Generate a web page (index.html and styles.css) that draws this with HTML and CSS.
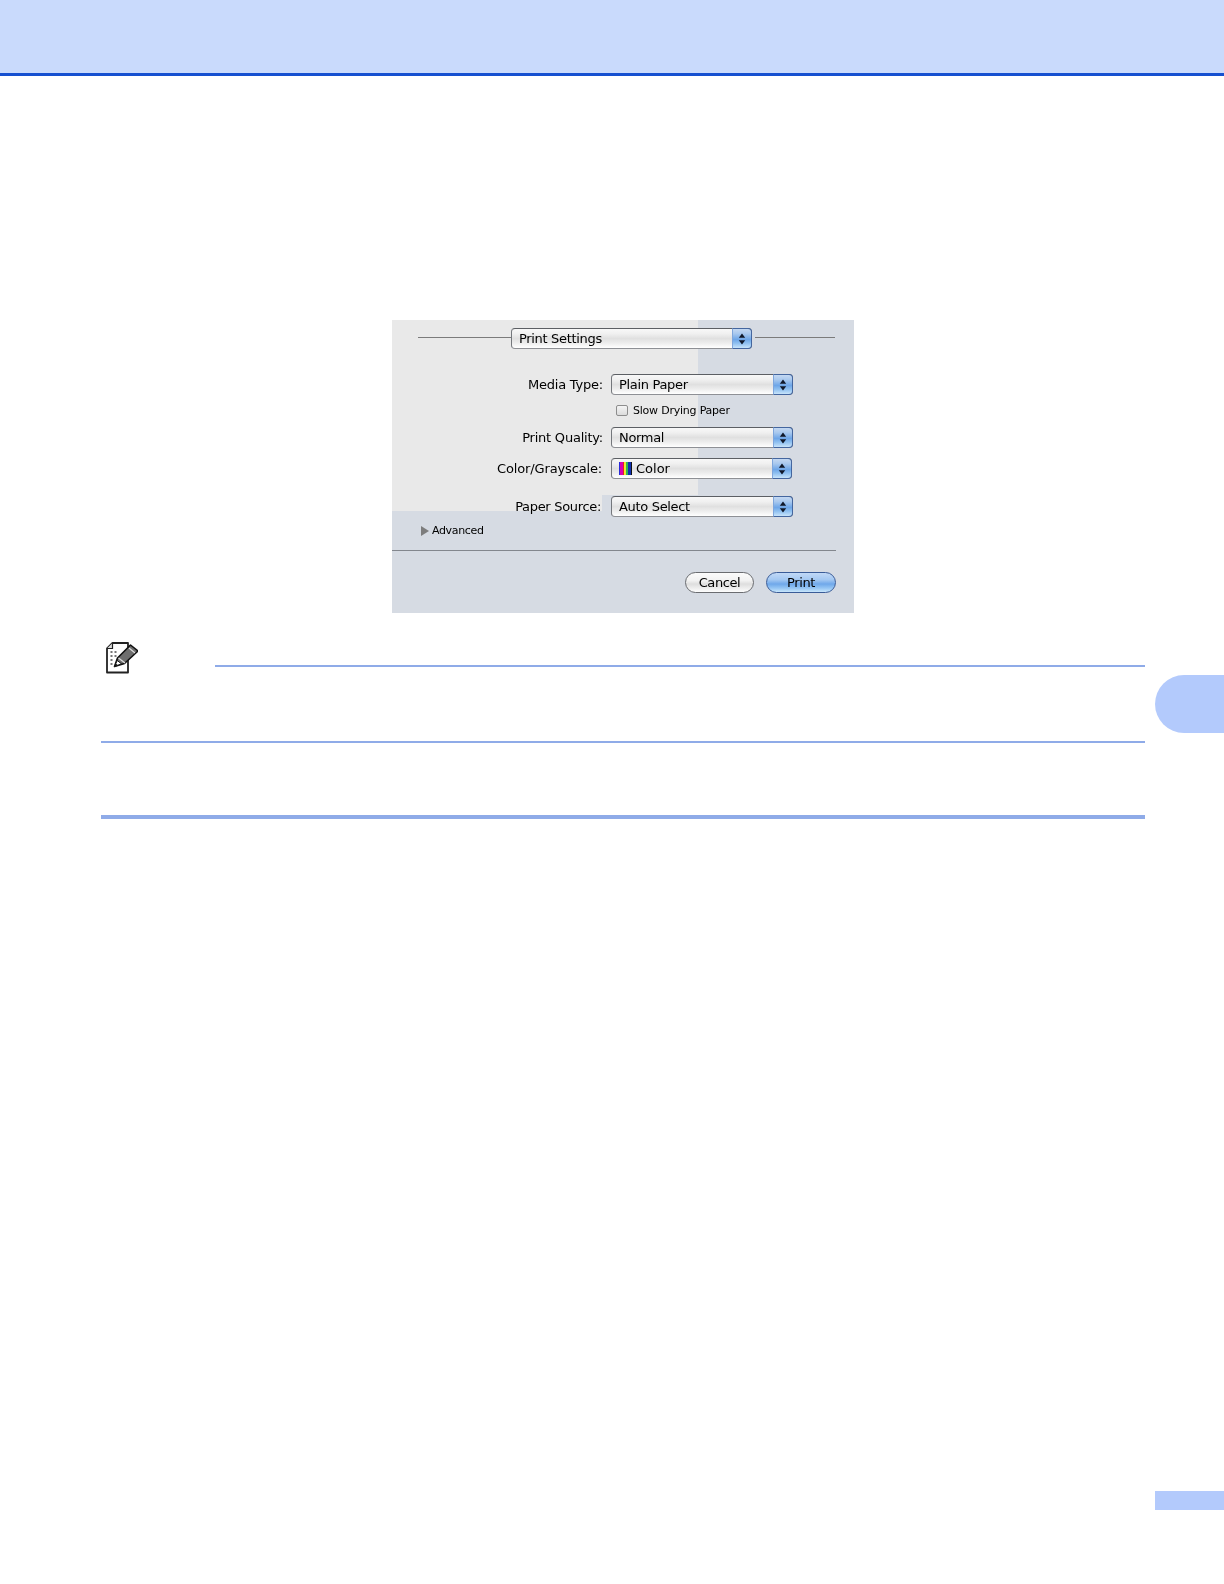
FILE: index.html
```html
<!DOCTYPE html>
<html lang="en">
<head>
<meta charset="utf-8">
<title>Print Settings</title>
<link rel="stylesheet" href="styles.css">
</head>
<body>
<div class="page">
  <header class="banner"></header>
  <main class="content">
    <section class="dialog">
      <div class="bg-light-top"></div>
      <div class="bg-light-left"></div>
      <div class="title-row">
        <span class="rule"></span>
        <div class="select select-title"><span class="select-text">Print Settings</span><span class="stepper"><svg class="arrows" viewBox="0 0 8 12"><path d="M4 0.500 7.200 4.700H0.800zM4 11.500 0.800 7.300H7.200z"/></svg></span></div>
        <span class="rule rule-right"></span>
      </div>
      <div class="form">
        <label class="label label-media">Media Type:</label>
        <div class="select"><span class="select-text">Plain Paper</span><span class="stepper"><svg class="arrows" viewBox="0 0 8 12"><path d="M4 0.500 7.200 4.700H0.800zM4 11.500 0.800 7.300H7.200z"/></svg></span></div>
        <div class="check-row"><span class="checkbox"></span><span class="check-text">Slow Drying Paper</span></div>
        <label class="label label-quality">Print Quality:</label>
        <div class="select select-quality"><span class="select-text">Normal</span><span class="stepper"><svg class="arrows" viewBox="0 0 8 12"><path d="M4 0.500 7.200 4.700H0.800zM4 11.500 0.800 7.300H7.200z"/></svg></span></div>
        <label class="label label-color">Color/Grayscale:</label>
        <div class="select select-color"><span class="swatch"></span><span class="select-text select-text-color">Color</span><span class="stepper"><svg class="arrows" viewBox="0 0 8 12"><path d="M4 0.500 7.200 4.700H0.800zM4 11.500 0.800 7.300H7.200z"/></svg></span></div>
        <label class="label label-source">Paper Source:</label>
        <div class="select select-source"><span class="select-text">Auto Select</span><span class="stepper"><svg class="arrows" viewBox="0 0 8 12"><path d="M4 0.500 7.200 4.700H0.800zM4 11.500 0.800 7.300H7.200z"/></svg></span></div>
      </div>
      <div class="advanced"><span class="disclosure"></span><span class="advanced-text">Advanced</span></div>
      <div class="divider"></div>
      <div class="actions">
        <button class="btn">Cancel</button>
        <button class="btn btn-primary">Print</button>
      </div>
    </section>
    <section class="note">
      <div class="note-head">
        <svg class="note-icon" viewBox="0 0 32 32">
          <path d="M6.500 1H22V30.500H1V6.500Z" fill="#fff" stroke="#222" stroke-width="1.800" stroke-linejoin="round"/>
          <path d="M6.500 1V6.500H1" fill="#ddd" stroke="#222" stroke-width="1.200"/>
          <path d="M4.500 10h2M8.500 10h2M4.500 14h2M8.500 14h2M4.500 18h2M4.500 22h2" stroke="#777" stroke-width="1.800" fill="none"/>
          <path d="M8.500 24.500 11.500 16 24.500 3 32 9 18.500 21.500Z" fill="#6e6e6e" stroke="#111" stroke-width="1.600" stroke-linejoin="round"/>
          <path d="M12.500 16 19 21M23 6 29 11" stroke="#ddd" stroke-width="1.200" fill="none"/>
          <path d="M8.500 24.500 11.200 18.500 15.500 21.800Z" fill="#fff" stroke="#111" stroke-width="1"/>
          <path d="M8.500 24.500 9.700 21.500 12 23.200Z" fill="#111"/>
        </svg>
        <div class="note-rule"></div>
      </div>
      <div class="rule-full rule-mid"></div>
      <div class="rule-full rule-thick"></div>
    </section>
  </main>
  <div class="side-tab"></div>
  <div class="page-chip"></div>
</div>
</body>
</html>
```
FILE: styles.css
```css
* { box-sizing: border-box; }
html, body { margin: 0; padding: 0; background: #fff; }
body { font-family: "DejaVu Sans", "Liberation Sans", sans-serif; color: #000; }
.page { position: relative; width: 1224px; height: 1584px; overflow: hidden; }
.banner { height: 76px; background: #c9dafc; border-bottom: 3px solid #1650d0; }
.content { padding: 244px 79px 0 101px; }

.dialog {
  position: relative;
  width: 462px;
  height: 293px;
  margin-left: 291px;
  padding-top: 8px;
  background: #d6dbe3;
  filter: blur(0.35px);
}
.bg-light-top { position: absolute; left: 0; top: 0; width: 306px; height: 175px; background: #e9e9e9; }
.bg-light-left { position: absolute; left: 0; top: 175px; width: 210px; height: 16px; background: #e9e9e9; }

.title-row { position: relative; display: flex; align-items: center; padding-left: 26px; height: 21px; }
.rule { width: 93px; height: 1px; margin-top: -3px; background: #7b7b7b; }
.rule-right { width: 80px; margin-left: 3px; }

.select {
  position: relative;
  display: flex;
  align-items: center;
  width: 182px;
  height: 21px;
  padding-left: 7px;
  border: 1px solid #74777c;
  border-top-color: #5c5f64;
  border-bottom-color: #8e9095;
  border-radius: 4px;
  background: linear-gradient(#f8f8f8 0%, #f0f0f0 25%, #e0e0e0 50%, #ececec 72%, #ffffff 100%);
  font-size: 13px;
}
.select-title { width: 241px; }
.select-text { flex: 1; letter-spacing: -0.32px; margin-top: -1px; }
.select-text-color { margin-left: 4px; letter-spacing: 0; }
.select-color { width: 181px; }
.stepper {
  display: flex;
  align-items: center;
  justify-content: center;
  width: 20px;
  height: 21px;
  margin: -1px -1px -1px 0;
  border: 1px solid #44669f;
  border-left-color: #7fa6dc;
  border-radius: 0 4px 4px 0;
  background: linear-gradient(#c4d8f2 0%, #a8c8ee 25%, #6ea6e8 55%, #8fc0f0 75%, #c8e4fb 100%);
}
.arrows { width: 8px; height: 12px; fill: #10182a; }
.swatch {
  width: 13px;
  height: 13px;
  background: linear-gradient(90deg, #2a2ad8 0 6%, #d800b0 6% 28%, #e82020 28% 36%, #f0e830 36% 52%, #30b850 52% 68%, #1030b0 68% 92%, #111 92%);
}

.form {
  position: relative;
  display: grid;
  grid-template-columns: 211px 182px;
  column-gap: 8px;
  margin-top: 25px;
  align-items: center;
}
.label { font-size: 13px; letter-spacing: -0.22px; text-align: right; margin-top: -1px; }
.check-row { grid-column: 2; display: flex; align-items: center; height: 32px; padding: 0 0 2px 5px; }
.checkbox {
  width: 12px;
  height: 11px;
  border: 1px solid #8d8d8d;
  border-radius: 2px;
  background: linear-gradient(#f4f4f4, #dcdcdc);
}
.check-text { margin-left: 5px; font-size: 11px; letter-spacing: -0.22px; }
.label-color { margin-top: 10px; padding-right: 1px; letter-spacing: -0.15px; }
.select-color { margin-top: 10px; }
.label-source { margin-top: 17px; padding-right: 2px; letter-spacing: -0.32px; }
.select-source { margin-top: 17px; }

.advanced { position: relative; display: flex; align-items: center; margin-top: 7px; padding-left: 29px; height: 14px; }
.disclosure {
  width: 0;
  height: 0;
  border-left: 8px solid #7d7d7d;
  border-top: 5px solid transparent;
  border-bottom: 5px solid transparent;
}
.advanced-text { margin: -1px 0 0 3px; font-size: 11px; letter-spacing: -0.35px; }
.divider { width: 444px; height: 1px; margin-top: 12px; background: #83878e; }

.actions { display: flex; justify-content: flex-end; gap: 12px; width: 444px; margin-top: 21px; }
.btn {
  width: 69px;
  height: 21px;
  padding: 0;
  border: 1px solid #6a6c70;
  border-radius: 11px;
  background: linear-gradient(#fbfbfb 0%, #f2f2f2 40%, #dedede 58%, #fdfdfd 100%);
  font-family: inherit;
  font-size: 13px;
  letter-spacing: -0.4px;
  color: #000;
}
.btn-primary {
  width: 70px;
  border-color: #3a5c98;
  background: linear-gradient(#c2d9f6 0%, #a4c8f2 35%, #6fa8ea 58%, #96c6f4 80%, #c8e6fb 100%);
}

.note { margin-top: 27px; }
.note-head { display: flex; align-items: flex-end; height: 36px; padding-left: 5px; }
.note-icon { width: 32px; height: 32px; margin-bottom: 2px; flex: none; }
.note-rule { flex: 1; height: 2px; margin: 0 0 9px 77px; background: #8fabe8; }
.rule-full { background: #8fabe8; }
.rule-mid { height: 2px; margin-top: 65px; }
.rule-thick { height: 4px; margin-top: 72px; }

.side-tab {
  position: absolute;
  right: 0;
  top: 675px;
  width: 69px;
  height: 58px;
  border-radius: 29px 0 0 29px;
  background: #b3cafc;
}
.page-chip { position: absolute; right: 0; top: 1491px; width: 69px; height: 19px; background: #b3cafc; }
```
